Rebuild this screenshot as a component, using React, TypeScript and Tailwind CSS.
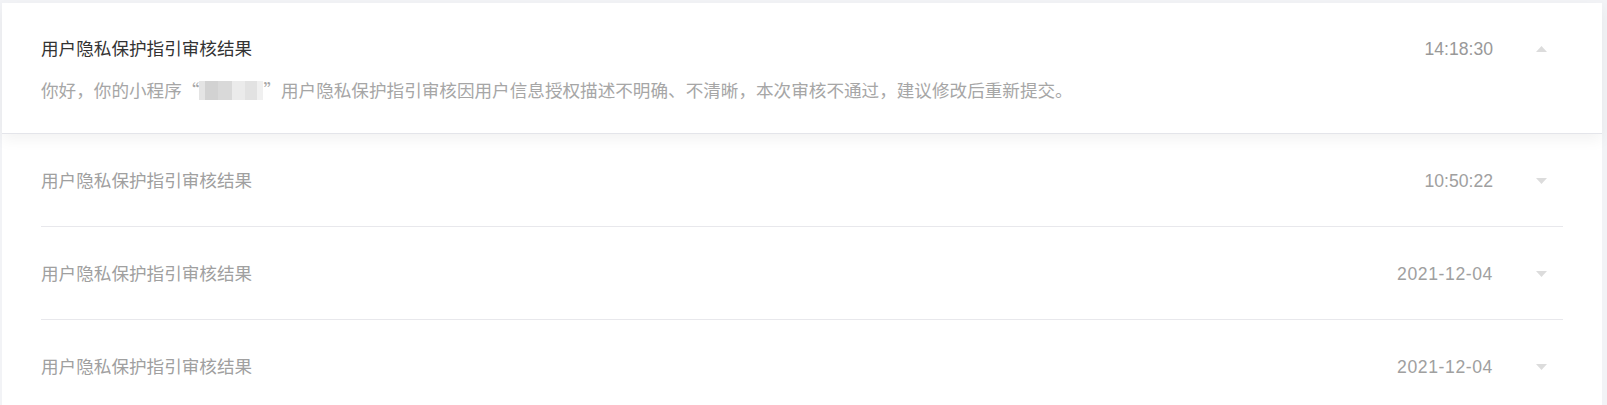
import React from "react";

const font = { fontFamily: '"Liberation Sans", "Noto Sans CJK SC", sans-serif' };
const cjk = { fontFamily: '"Noto Sans CJK SC", sans-serif' };

function Caret({ up }: { up?: boolean }) {
  return (
    <svg width="11" height="6" viewBox="0 0 11 6" className="ml-[43px] mr-[16px] shrink-0">
      {up ? <path d="M0 6 L5.5 0 L11 6 Z" fill="#dcdcdc" /> : <path d="M0 0 L5.5 6 L11 0 Z" fill="#dcdcdc" />}
    </svg>
  );
}

function Blur() {
  return (
    <span className="inline-flex align-middle h-[19px] w-[64px] -mt-[3px] overflow-hidden">
      <span className="w-[6px] bg-[#e4e4e4]" />
      <span className="w-[13px] bg-[#d2d2d2]" />
      <span className="w-[14px] bg-[#d9d9d9]" />
      <span className="w-[13px] bg-[#ebebeb]" />
      <span className="w-[12px] bg-[#e2e2e2]" />
      <span className="w-[6px] bg-[#f0f0f0]" />
    </span>
  );
}

const rows = [
  { title: "用户隐私保护指引审核结果", time: "10:50:22" },
  { title: "用户隐私保护指引审核结果", time: "2021-12-04" },
  { title: "用户隐私保护指引审核结果", time: "2021-12-04" },
];

export default function App() {
  return (
    <div className="min-h-screen bg-[#f2f3f6] pl-[2px] pt-[3px] overflow-hidden" style={font}>
      <div className="w-[1600px] min-h-[410px] bg-white">
        <div className="relative z-10 bg-white border-b border-[#e4e5ea] shadow-[0_6px_14px_rgba(0,0,0,0.05)] pl-[39px] pr-[39px] pt-[34px] pb-[31px]">
          <div className="flex items-center h-[24px]">
            <div className="flex-1 text-[17.6px] text-[#333]">用户隐私保护指引审核结果</div>
            <div className="text-[17.6px] text-[#999]">14:18:30</div>
            <Caret up />
          </div>
          <div className="mt-[17px] h-[24px] leading-[24px] text-[17.6px] text-[#a6a6a6] whitespace-nowrap">
            你好，你的小程序<span style={cjk}>“</span><Blur /><span style={cjk}>”</span>用户隐私保护指引审核因用户信息授权描述不明确、不清晰，本次审核不通过，建议修改后重新提交。
          </div>
        </div>
        <div className="px-[39px]">
          {rows.map((r, i) => (
            <div key={i} className="flex items-center h-[93px] border-b border-[#e8e8ec] pt-[2px]">
              <div className="flex-1 text-[17.6px] text-[#a0a0a0]">{r.title}</div>
              <div className={r.time.includes("-") ? "text-[17.6px] text-[#a0a0a0] tracking-[0.6px]" : "text-[17.6px] text-[#a0a0a0]"}>{r.time}</div>
              <Caret />
            </div>
          ))}
        </div>
      </div>
    </div>
  );
}
